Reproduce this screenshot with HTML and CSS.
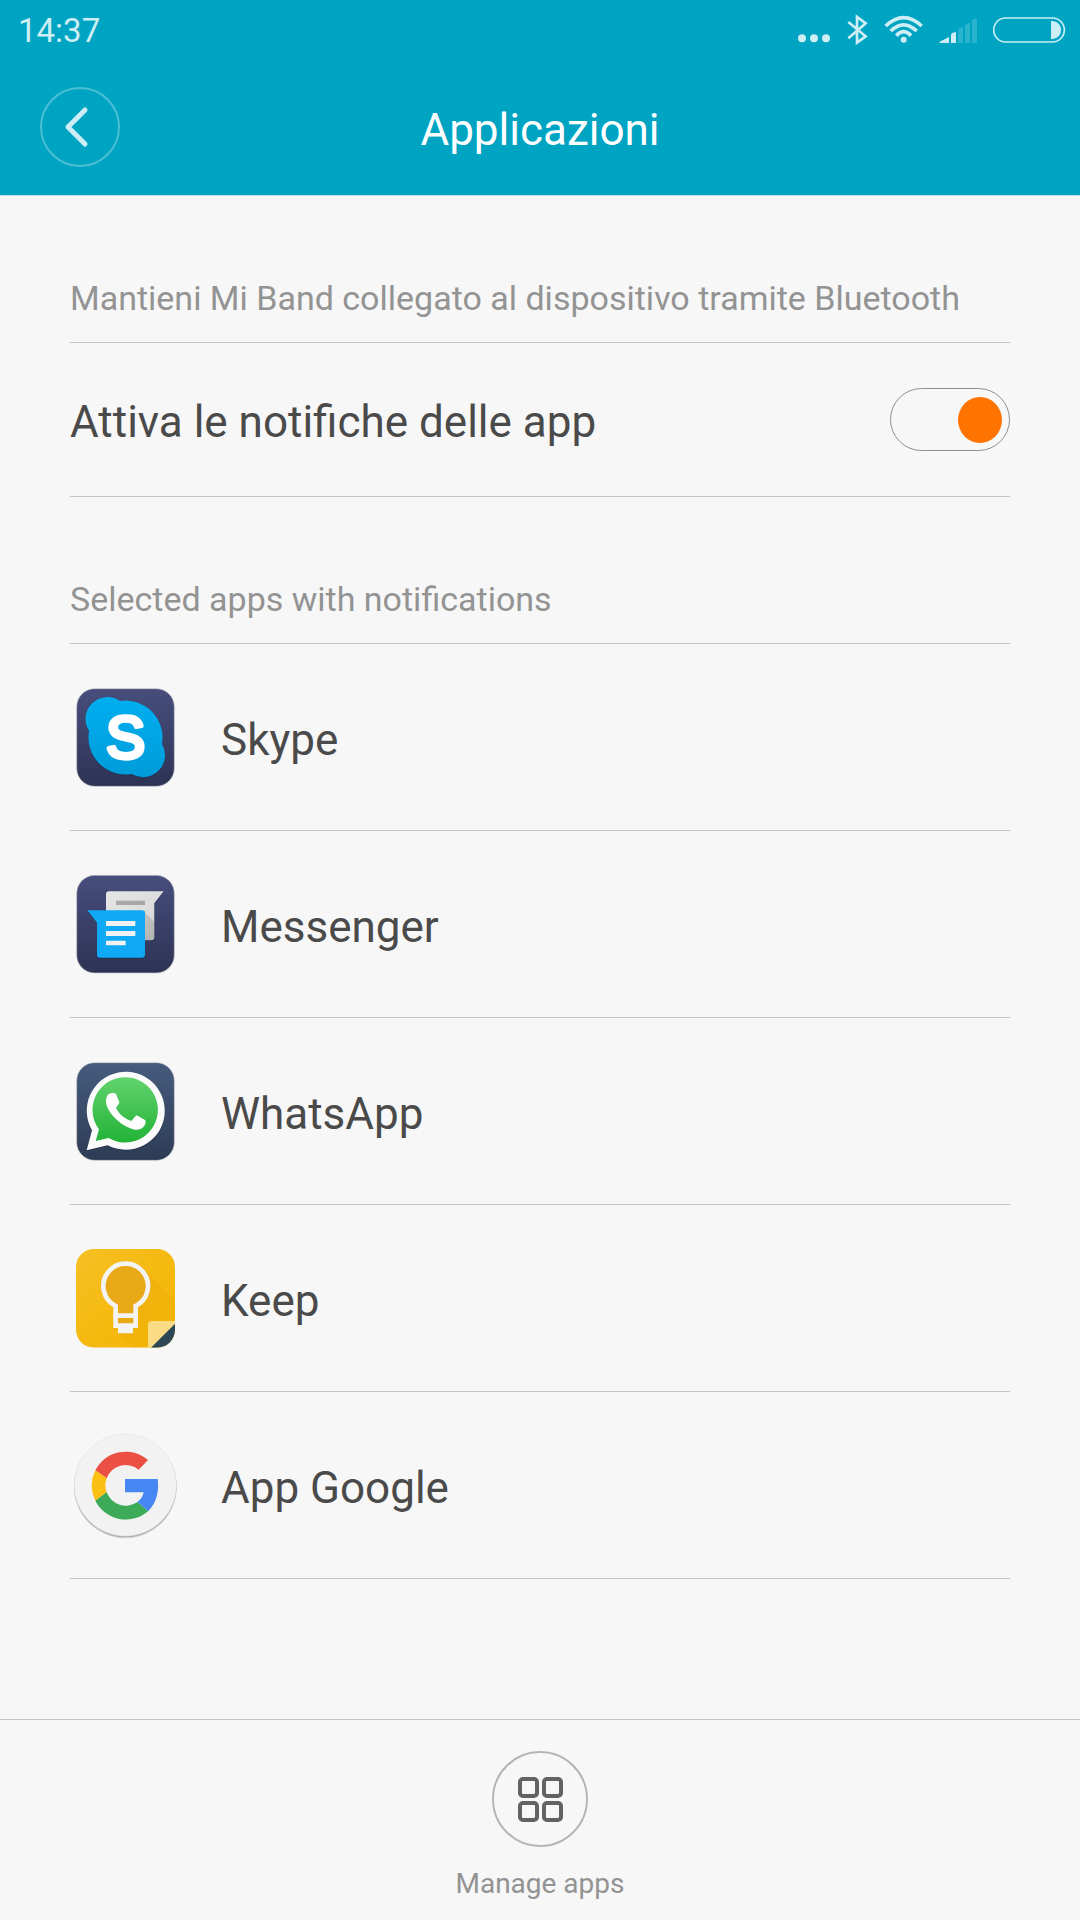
FILE: index.html
```
<!DOCTYPE html>
<html lang="it">
<head>
  <meta charset="UTF-8">
  <meta name="viewport" content="width=device-width, initial-scale=1.0">
  <title>Applicazioni</title>
  <link rel="stylesheet" href="styles.css">
</head>
<body>
  <header class="header">
    <div class="status-bar">
      <span class="clock">14:37</span>
      <div class="status-icons">
        <svg width="33" height="60" viewBox="50 0 99 180">
          <circle cx="62" cy="115" r="12"/><circle cx="98" cy="115" r="12"/><circle cx="134" cy="115" r="12"/>
        </svg>
        <svg width="21" height="60" viewBox="200 0 63 180">
          <path d="M204 66L256 109L230 128V51L256 70L204 115" fill="none" stroke="currentColor" stroke-width="8"/>
        </svg>
        <svg width="39" height="60" viewBox="313 0 117 180">
          <circle cx="372" cy="119" r="9"/>
          <path d="M318 78Q372 28 426 78M333 93Q372 56 411 93M350 107Q372 83 394 107" fill="none" stroke="currentColor" stroke-width="11"/>
        </svg>
        <svg width="38" height="60" viewBox="480 0 114 180">
          <path d="M482 129V125L510 111V129ZM516 129V105Q516 98 531 96V129Z"/>
          <path class="signal-off" d="M537 129V91Q537 84 552 81V129ZM558 129V78Q558 71 573 68V129ZM579 129V64Q579 57 594 54V129Z"/>
        </svg>
        <svg width="73" height="60" viewBox="639 0 219 180">
          <rect x="641" y="54" width="212" height="72" rx="36" fill="none" stroke="currentColor" stroke-width="5"/>
          <path d="M813 63H818Q843 67 843 90T818 117H813Z"/>
        </svg>
      </div>
    </div>
    <div class="nav">
      <button class="back" type="button" aria-label="Indietro">
        <svg width="76" height="76" viewBox="0 0 76 76">
          <path d="M43 21L26 38L43 55" fill="none" stroke="currentColor" stroke-width="5" stroke-linecap="round" stroke-linejoin="round"/>
        </svg>
      </button>
      <h1>Applicazioni</h1>
    </div>
  </header>

  <main class="content">
    <h2 class="section-title">Mantieni Mi Band collegato al dispositivo tramite Bluetooth</h2>
    <div class="row toggle-row">
      <label class="label" for="notifiche">Attiva le notifiche delle app</label>
      <input class="toggle" type="checkbox" role="switch" id="notifiche" checked>
    </div>

    <h2 class="section-title">Selected apps with notifications</h2>
    <ul class="apps">
      <li class="row">
        <svg class="icon" viewBox="30 36 330 330">
          <defs>
            <linearGradient id="night" x1="0" y1="0" x2="0" y2="1"><stop offset="0" stop-color="#474e7c"/><stop offset="1" stop-color="#2d3354"/></linearGradient>
            <linearGradient id="sky" x1="0" y1="0" x2="0" y2="1"><stop offset="0" stop-color="#00aff0"/><stop offset="1" stop-color="#009bd9"/></linearGradient>
          </defs>
          <rect x="50" y="56" width="293" height="293" rx="54" fill="url(#night)" stroke="#c9c9cf" stroke-width="2"/>
          <path d="M180 93A111 111 0 0 1 306 222A66 66 0 0 1 215 312A111 111 0 0 1 87 183A66 66 0 0 1 180 93Z" fill="#1d2547" opacity=".5" transform="translate(0 3)"/>
          <path d="M180 93A111 111 0 0 1 306 222A66 66 0 0 1 215 312A111 111 0 0 1 87 183A66 66 0 0 1 180 93Z" fill="url(#sky)"/>
          <text class="skype-s" x="197" y="264" text-anchor="middle">S</text>
        </svg>
        <span class="label">Skype</span>
      </li>
      <li class="row">
        <svg class="icon" viewBox="30 27 330 330">
          <defs>
            <linearGradient id="paper" x1="0" y1="0" x2="1" y2="1"><stop offset="0" stop-color="#e6e6e6"/><stop offset=".6" stop-color="#dcdcdc"/><stop offset="1" stop-color="#c8c8c8"/></linearGradient>
          </defs>
          <rect x="50" y="46" width="293" height="293" rx="54" fill="url(#night)" stroke="#c9c9cf" stroke-width="2"/>
          <path d="M147 97H311L284 133V235Q283 244 274 244H147Z" fill="#1d2547" opacity=".6"/>
          <path d="M147 94H311L283 130V232Q283 241 274 241H147Q138 241 138 232V103Q138 94 147 94Z" fill="url(#paper)"/>
          <path d="M251 154L283 186V232Q283 241 274 241H251Z" fill="#000" opacity=".12"/>
          <rect x="168" y="122" width="87" height="13" fill="#a8a8a8"/>
          <path d="M82 154H255V288Q255 297 246 297H120Q111 297 111 288V191Z" fill="#1d2547" opacity=".5"/>
          <path d="M82 151H246Q255 151 255 160V284Q255 293 246 293H120Q111 293 111 284V188Z" fill="#0fa9f5"/>
          <path d="M138 183H226V198H138ZM138 213H226V228H138ZM138 242H197V256H138Z" fill="#f1f1f1"/>
        </svg>
        <span class="label">Messenger</span>
      </li>
      <li class="row">
        <svg class="icon" viewBox="30 33 330 330">
          <defs>
            <linearGradient id="slate" x1="0" y1="0" x2="0" y2="1"><stop offset="0" stop-color="#465b7d"/><stop offset="1" stop-color="#2d3c55"/></linearGradient>
            <linearGradient id="leaf" x1="0" y1="0" x2="0" y2="1"><stop offset="0" stop-color="#62d36d"/><stop offset="1" stop-color="#22b338"/></linearGradient>
          </defs>
          <rect x="50" y="53" width="293" height="293" rx="54" fill="url(#slate)" stroke="#c9c9cf" stroke-width="2"/>
          <path d="M80 319L96 259A117 117 0 1 1 143 304Z" fill="#1c2a40" opacity=".5"/>
          <path d="M80 316L96 256A117 117 0 1 1 143 301Z" fill="#fbfbfb"/>
          <path d="M107 288L117 253A98 98 0 1 1 146 279Z" fill="url(#leaf)"/>
          <path d="M157 144C164 143 167 145 169 149L178 171C179 176 172 183 168 188C177 208 194 221 214 228L227 213C229 211 232 212 234 213L255 225C259 228 257 235 254 241C249 251 236 256 225 254C198 249 165 226 148 198C138 182 135 167 141 154C144 147 150 144 157 144Z" fill="#fff"/>
        </svg>
        <span class="label">WhatsApp</span>
      </li>
      <li class="row">
        <svg class="icon" viewBox="30 39 330 330">
          <defs>
            <linearGradient id="amber" x1="0" y1="0" x2="1" y2="1"><stop offset="0" stop-color="#f6bf23"/><stop offset="1" stop-color="#f4b400"/></linearGradient>
            <linearGradient id="bulb-shade" x1="0" y1="0" x2="1" y2="1"><stop offset="0" stop-color="#e09d0c" stop-opacity=".6"/><stop offset="1" stop-color="#f0b00c" stop-opacity="0"/></linearGradient>
            <clipPath id="tile"><rect x="48" y="57" width="297" height="296" rx="54"/></clipPath>
          </defs>
          <g clip-path="url(#tile)">
            <rect x="48" y="57" width="297" height="296" fill="url(#amber)"/>
            <path d="M249 115L345 211V353H219L174 310Z" fill="url(#bulb-shade)"/>
            <path d="M264 353V285Q264 273 276 273H345V353Z" fill="#fadc85"/>
            <path d="M345 281V353H273Z" fill="#2d4756"/>
          </g>
          <path d="M167 287V228A67 67 0 1 1 227 228V287Z" fill="#e9a916" stroke="#f3f3f3" stroke-width="14"/>
          <path d="M160 250H234V264H160ZM174 287H219V310H174Z" fill="#f3f3f3"/>
        </svg>
        <span class="label">Keep</span>
      </li>
      <li class="row">
        <svg class="icon" viewBox="30 45 330 330">
          <circle cx="196" cy="216" r="154" fill="#000" opacity=".1"/>
          <circle cx="196" cy="213" r="154" fill="#000" opacity=".22"/>
          <circle cx="196" cy="210" r="153" fill="#f2f2f2" stroke="#e6e6e6" stroke-width="2"/>
          <path d="M106 166A102 102 0 0 1 264 135L236 164A61 61 0 0 0 140 190Z" fill="#ec5044"/>
          <path d="M106 166L140 190A61 61 0 0 0 140 232L106 257A102 102 0 0 1 106 166Z" fill="#fbc013"/>
          <path d="M106 257L140 232A61 61 0 0 0 232 261L265 288A102 102 0 0 1 106 257Z" fill="#3daa58"/>
          <path d="M195 192H293C298 225 290 265 265 288L232 261C242 254 249 244 251 232H195Z" fill="#4687f4"/>
        </svg>
        <span class="label">App Google</span>
      </li>
    </ul>
  </main>

  <footer class="footer">
    <button class="manage" type="button">
      <span class="manage-circle">
        <svg width="46" height="46" viewBox="0 0 46 46">
          <g fill="none" stroke="#636363" stroke-width="4">
            <rect x="3" y="3" width="17" height="17" rx="3"/>
            <rect x="27" y="3" width="17" height="17" rx="3"/>
            <rect x="3" y="27" width="17" height="17" rx="3"/>
            <rect x="27" y="27" width="17" height="17" rx="3"/>
          </g>
        </svg>
      </span>
      Manage apps
    </button>
  </footer>
</body>
</html>
```

FILE: styles.css
```
* {
  box-sizing: border-box;
}
body {
  margin: 0;
  min-height: 100vh;
  display: flex;
  flex-direction: column;
  background-color: #f7f7f7;
  color: #4a4a4a;
  font-family: Roboto, sans-serif;
}
h1, h2, ul {
  margin: 0;
  padding: 0;
  font-weight: 400;
}
button {
  padding: 0;
  border: 0;
  background: none;
  font-family: inherit;
}
svg {
  display: block;
  flex: none;
}

/* Header */
.header {
  border-bottom: 1px solid #c4dfe5;
  background-color: #00a4c3;
  color: #cceef4;
}
.status-bar {
  display: flex;
  justify-content: space-between;
  align-items: center;
  height: 60px;
  padding: 0 14px 0 18px;
}
.clock {
  font-size: 33px;
  line-height: 40px;
  padding-top: 2px;
}
.status-icons {
  display: flex;
  gap: 16px;
  fill: currentColor;
}
.signal-off {
  opacity: 0.2;
}
.nav {
  display: grid;
  grid-template-columns: 80px 1fr 80px;
  align-items: center;
  height: 135px;
  padding: 0 40px 2px;
}
.back {
  display: flex;
  align-items: center;
  justify-content: center;
  width: 80px;
  height: 80px;
  border: 2px solid rgba(255, 255, 255, 0.3);
  border-radius: 50%;
  color: inherit;
}
.nav h1 {
  padding-top: 6px;
  color: #fff;
  font-size: 44px;
  line-height: 52px;
  text-align: center;
}

/* Settings list */
.content {
  flex: 1;
  padding: 0 70px;
}
.section-title {
  padding: 82px 0 24px;
  border-bottom: 1px solid #c4c4c4;
  color: #939393;
  font-size: 34px;
  line-height: 40px;
}
.row {
  display: flex;
  align-items: center;
  gap: 41px;
  height: 187px;
  border-bottom: 1px solid #c4c4c4;
}
.toggle-row {
  justify-content: space-between;
  height: 154px;
}
.label {
  padding-top: 6px;
  font-size: 44px;
  line-height: 52px;
}
.toggle-row .label {
  padding-top: 4px;
}
.toggle {
  appearance: none;
  display: flex;
  align-items: center;
  width: 120px;
  height: 63px;
  margin: 0;
  padding: 0 7px;
  border: 1px solid #8e8e8e;
  border-radius: 32px;
}
.toggle::before {
  content: "";
  width: 44px;
  height: 46px;
  border-radius: 50%;
  background-color: #b5b5b5;
}
.toggle:checked {
  justify-content: flex-end;
}
.toggle:checked::before {
  background-color: #ff7300;
}
.apps {
  list-style: none;
}
.icon {
  width: 110px;
  height: 110px;
}
.skype-s {
  fill: #fff;
  stroke: #fff;
  stroke-width: 13px;
  stroke-linejoin: round;
  font: 176px "Liberation Sans", sans-serif;
}

/* Bottom bar */
.footer {
  display: flex;
  justify-content: center;
  padding: 31px 0 19px;
  border-top: 1px solid #c4c4c4;
}
.manage {
  display: flex;
  flex-direction: column;
  align-items: center;
  gap: 20px;
  color: #939393;
  font-size: 28px;
  line-height: 34px;
}
.manage-circle {
  display: flex;
  align-items: center;
  justify-content: center;
  width: 96px;
  height: 96px;
  border: 2px solid #b5b5b5;
  border-radius: 50%;
}
```
